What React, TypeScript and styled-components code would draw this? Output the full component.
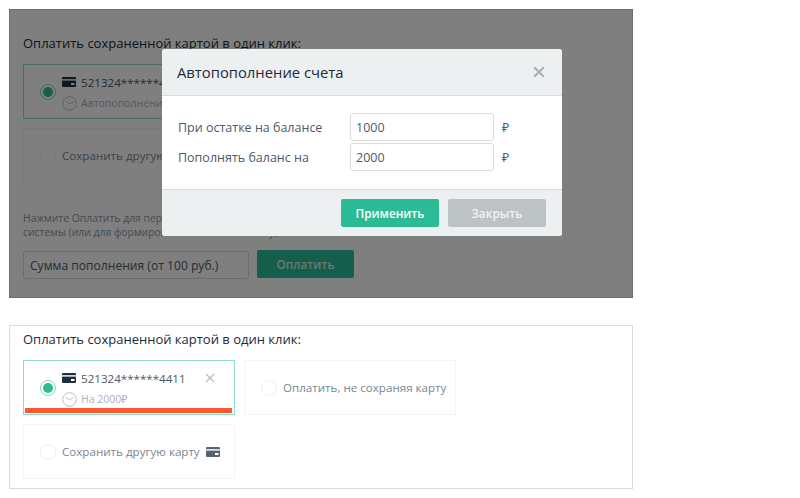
import React from "react";
import styled, { createGlobalStyle } from "styled-components";

const Global = createGlobalStyle`
  html, body { margin: 0; padding: 0; background: #fff; }
  body { font-family: "Open Sans", "Noto Sans", sans-serif; color: #1e2b3a; }
  * { box-sizing: border-box; }
`;

const Page = styled.div`
  width: 800px;
  height: 498px;
  padding: 9px 0 0 9px;
  display: flex;
  flex-direction: column;
  gap: 27px;
  overflow: hidden;
`;

const Panel = styled.section<{ $height: number }>`
  position: relative;
  width: 624px;
  height: ${(p) => p.$height}px;
  border: 1px solid #dcdcdc;
  padding: 0 13px;
  background: #fff;
`;

const Title = styled.h3<{ $top: number }>`
  margin: ${(p) => p.$top}px 0 0;
  font-size: 13px;
  line-height: 18px;
  font-weight: 500;
  color: #1b2a3c;
  white-space: nowrap;
`;

const Cards = styled.div<{ $top: number; $width: number }>`
  display: flex;
  flex-wrap: wrap;
  gap: 9px;
  margin-top: ${(p) => p.$top}px;
  width: ${(p) => p.$width}px;
`;

const Card = styled.div<{ $active?: boolean }>`
  position: relative;
  width: 212px;
  height: 55px;
  border: 1px solid ${(p) => (p.$active ? "#90dcc4" : "#f3f4f5")};
  padding-left: 16px;
  display: flex;
  align-items: center;
  gap: 6px;
  background: #fff;
`;

const Radio = styled.span<{ $on?: boolean }>`
  flex: none;
  width: 16px;
  height: 16px;
  border-radius: 50%;
  border: 1px solid ${(p) => (p.$on ? "#7fd8bd" : "#eceef0")};
  background: #fff;
  display: flex;
  align-items: center;
  justify-content: center;
  &::after {
    content: "";
    display: ${(p) => (p.$on ? "block" : "none")};
    width: 10px;
    height: 10px;
    border-radius: 50%;
    background: #2bbc96;
  }
`;

const CardBody = styled.div`
  display: flex;
  flex-direction: column;
  gap: 2px;
  flex: 1;
  margin-top: 2px;
`;

const Row = styled.div`
  display: flex;
  align-items: center;
  gap: 5px;
  height: 19px;
  white-space: nowrap;
`;

const CardNumber = styled.span`
  font-size: 11.6px;
  color: #4d5a68;
`;

const Sub = styled.span`
  font-size: 10.5px;
  color: #a9b1b8;
`;

const Label = styled.span`
  font-size: 11.6px;
  color: #7a8591;
  white-space: nowrap;
`;

const Remove = styled.span`
  position: absolute;
  top: 12px;
  right: 19px;
  display: flex;
`;

const Strike = styled.div`
  position: absolute;
  left: 1px;
  right: 2px;
  bottom: 1px;
  height: 5px;
  background: #fb5731;
`;

const Hint = styled.p`
  margin: 28px 0 0;
  width: 440px;
  font-size: 10.4px;
  line-height: 14px;
  color: #8d97a1;
`;

const PayRow = styled.div`
  display: flex;
  gap: 8px;
  margin-top: 11px;
`;

const AmountInput = styled.div`
  width: 226px;
  height: 28px;
  margin-top: 1px;
  border: 1px solid #d9d9d9;
  border-radius: 2px;
  padding-left: 6px;
  display: flex;
  align-items: center;
  font-size: 12.1px;
  color: #4d5a68;
`;

const PayButton = styled.div`
  width: 97px;
  height: 28px;
  border-radius: 2px;
  background: #2bbc96;
  color: #ffffffcc;
  font-size: 11.8px;
  font-weight: 600;
  display: flex;
  align-items: center;
  justify-content: center;
`;

const Overlay = styled.div`
  position: absolute;
  inset: -1px;
  background: rgba(0, 0, 0, 0.5);
`;

const Modal = styled.div`
  position: absolute;
  left: 152px;
  top: 39px;
  width: 400px;
  height: 187px;
  border-radius: 3px;
  background: #fff;
  display: flex;
  flex-direction: column;
  overflow: hidden;
`;

const ModalHead = styled.header`
  height: 47px;
  flex: none;
  background: #edf0f1;
  border-bottom: 1px solid #d8dcdf;
  display: flex;
  align-items: center;
  justify-content: space-between;
  padding: 0 17px 0 15px;
  font-size: 14.8px;
  font-weight: 500;
  color: #1b2a3c;
`;

const ModalBody = styled.div`
  flex: 1;
  padding: 17px 16px 0;
  display: flex;
  flex-direction: column;
  gap: 2px;
`;

const Field = styled.div`
  display: flex;
  align-items: center;
  height: 28px;
  font-size: 12.5px;
  color: #4d5a68;
`;

const FieldName = styled.span`
  width: 172px;
  white-space: nowrap;
`;

const FieldInput = styled.div`
  width: 144px;
  height: 28px;
  border: 1px solid #dcdcdc;
  border-radius: 3px;
  padding-left: 5px;
  display: flex;
  align-items: center;
  font-size: 12.5px;
  color: #4d5a68;
  margin-right: 8px;
`;

const Rub = styled.span`
  font-size: 12.5px;
  color: #4d5a68;
`;

const ModalFoot = styled.footer`
  height: 47px;
  flex: none;
  background: #edf0f1;
  border-top: 1px solid #d8dcdf;
  display: flex;
  align-items: center;
  justify-content: flex-end;
  gap: 9px;
  padding: 0 16px;
`;

const FootButton = styled.div<{ $primary?: boolean }>`
  width: 98px;
  height: 28px;
  border-radius: 2px;
  background: ${(p) => (p.$primary ? "#2bbc96" : "#bdc2c5")};
  color: ${(p) => (p.$primary ? "#fff" : "#f0f2f3")};
  font-size: 11.8px;
  font-weight: 600;
  display: flex;
  align-items: center;
  justify-content: center;
`;

const CardIcon = ({ c = "#1f2f40" }: { c?: string }) => (
  <svg width="14" height="10" viewBox="0 0 14 10" style={{ flex: "none" }}>
    <rect x="0" y="0" width="14" height="10" rx="1" fill={c} />
    <rect x="0" y="2.2" width="14" height="1.4" fill="#fff" />
    <rect x="9" y="6" width="3.5" height="2" fill="#fff" />
  </svg>
);

const ClockIcon = () => (
  <svg width="15" height="15" viewBox="0 0 15 15" fill="none" stroke="#b9c0c5" strokeWidth="1" style={{ flex: "none", marginLeft: "-0.5px", marginRight: "-0.5px" }}>
    <circle cx="7.5" cy="7.5" r="6.8" />
    <path d="M3.8 5.2 L7.3 8 L11.4 5.6" />
  </svg>
);

const Cross = ({ size, c, w }: { size: number; c: string; w: number }) => (
  <svg width={size} height={size} viewBox="0 0 10 10" stroke={c} strokeWidth={w} fill="none">
    <path d="M1 1 L9 9 M9 1 L1 9" />
  </svg>
);

export default function App() {
  return (
    <>
      <Global />
      <Page>
        <Panel $height={289}>
          <Title $top={24}>Оплатить сохраненной картой в один клик:</Title>
          <Cards $top={12} $width={230}>
            <Card $active>
              <Radio $on />
              <CardBody>
                <Row>
                  <CardIcon />
                  <CardNumber>521324******4411</CardNumber>
                </Row>
                <Row>
                  <ClockIcon />
                  <Sub>Автопополнение</Sub>
                </Row>
              </CardBody>
            </Card>
            <Card>
              <Radio />
              <Label>Сохранить другую карту</Label>
            </Card>
          </Cards>
          <Hint>
            Нажмите Оплатить для перехода на страницу платежной
            <br />
            системы (или для формирования счета на оплату)
          </Hint>
          <PayRow>
            <AmountInput>Сумма пополнения (от 100 руб.)</AmountInput>
            <PayButton>Оплатить</PayButton>
          </PayRow>
          <Overlay />
          <Modal>
            <ModalHead>
              <span>Автопополнение счета</span>
              <Cross size={12} c="#a3acb2" w={1.6} />
            </ModalHead>
            <ModalBody>
              <Field>
                <FieldName>При остатке на балансе</FieldName>
                <FieldInput>1000</FieldInput>
                <Rub>₽</Rub>
              </Field>
              <Field>
                <FieldName>Пополнять баланс на</FieldName>
                <FieldInput>2000</FieldInput>
                <Rub>₽</Rub>
              </Field>
            </ModalBody>
            <ModalFoot>
              <FootButton $primary>Применить</FootButton>
              <FootButton>Закрыть</FootButton>
            </ModalFoot>
          </Modal>
        </Panel>
        <Panel $height={164}>
          <Title $top={4}>Оплатить сохраненной картой в один клик:</Title>
          <Cards $top={12} $width={440}>
            <Card $active>
              <Radio $on />
              <CardBody>
                <Row>
                  <CardIcon />
                  <CardNumber>521324******4411</CardNumber>
                </Row>
                <Row>
                  <ClockIcon />
                  <Sub>На 2000₽</Sub>
                </Row>
              </CardBody>
              <Remove>
                <Cross size={10} c="#b3bac0" w={1.2} />
              </Remove>
              <Strike />
            </Card>
            <Card>
              <Radio />
              <Label>Оплатить, не сохраняя карту</Label>
            </Card>
            <Card>
              <Radio />
              <Label>Сохранить другую карту</Label>
              <CardIcon c="#56636f" />
            </Card>
          </Cards>
        </Panel>
      </Page>
    </>
  );
}
